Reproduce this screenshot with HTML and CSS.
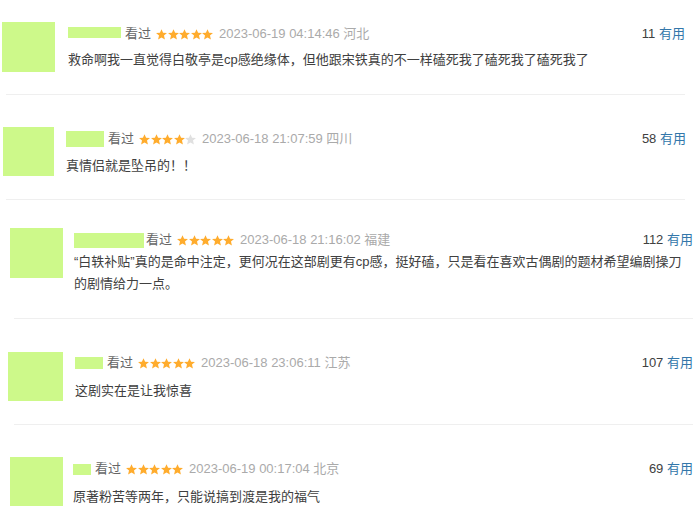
FILE: index.html
```html
<!DOCTYPE html>
<html lang="zh">
<head>
<meta charset="utf-8">
<title>短评</title>
<link rel="stylesheet" href="styles.css">
</head>
<body>
<svg width="0" height="0" class="defs">
  <defs>
    <symbol id="star" viewBox="1.2 1.2 21.6 21.6"><path d="M12 1.5l3.1 7.1 7.6.6-5.8 5 1.8 7.5L12 17.7l-6.7 4 1.8-7.5-5.8-5 7.6-.6z"/></symbol>
  </defs>
</svg>

<div class="review r1">
  <div class="avatar av1"></div>
  <div class="main m1">
    <div class="meta">
      <span class="name n1"></span>
      <span class="watched">看过</span>
      <span class="stars"><svg class="on"><use href="#star"/></svg><svg class="on"><use href="#star"/></svg><svg class="on"><use href="#star"/></svg><svg class="on"><use href="#star"/></svg><svg class="on"><use href="#star"/></svg></span>
      <span class="time">2023-06-19 04:14:46 河北</span>
      <span class="votes"><span class="count">11</span> <span class="useful">有用</span></span>
    </div>
    <p class="text t1">救命啊我一直觉得白敬亭是cp感绝缘体，但他跟宋铁真的不一样磕死我了磕死我了磕死我了</p>
  </div>
</div>
<div class="sep s1"></div>

<div class="review r2">
  <div class="avatar av2"></div>
  <div class="main m2">
    <div class="meta">
      <span class="name n2"></span>
      <span class="watched">看过</span>
      <span class="stars"><svg class="on"><use href="#star"/></svg><svg class="on"><use href="#star"/></svg><svg class="on"><use href="#star"/></svg><svg class="on"><use href="#star"/></svg><svg class="off"><use href="#star"/></svg></span>
      <span class="time">2023-06-18 21:07:59 四川</span>
      <span class="votes"><span class="count">58</span> <span class="useful">有用</span></span>
    </div>
    <p class="text t2">真情侣就是坠吊的！！</p>
  </div>
</div>
<div class="sep s2"></div>

<div class="review r3">
  <div class="avatar av3"></div>
  <div class="main m3">
    <div class="meta">
      <span class="name n3"></span>
      <span class="watched">看过</span>
      <span class="stars"><svg class="on"><use href="#star"/></svg><svg class="on"><use href="#star"/></svg><svg class="on"><use href="#star"/></svg><svg class="on"><use href="#star"/></svg><svg class="on"><use href="#star"/></svg></span>
      <span class="time">2023-06-18 21:16:02 福建</span>
      <span class="votes"><span class="count">112</span> <span class="useful">有用</span></span>
    </div>
    <p class="text t3">“白轶补贴”真的是命中注定，更何况在这部剧更有cp感，挺好磕，只是看在喜欢古偶剧的题材希望编剧操刀的剧情给力一点。</p>
  </div>
</div>
<div class="sep s3"></div>

<div class="review r4">
  <div class="avatar av4"></div>
  <div class="main m4">
    <div class="meta">
      <span class="name n4"></span>
      <span class="watched">看过</span>
      <span class="stars"><svg class="on"><use href="#star"/></svg><svg class="on"><use href="#star"/></svg><svg class="on"><use href="#star"/></svg><svg class="on"><use href="#star"/></svg><svg class="on"><use href="#star"/></svg></span>
      <span class="time">2023-06-18 23:06:11 江苏</span>
      <span class="votes"><span class="count">107</span> <span class="useful">有用</span></span>
    </div>
    <p class="text t4">这剧实在是让我惊喜</p>
  </div>
</div>
<div class="sep s4"></div>

<div class="review r5">
  <div class="avatar av5"></div>
  <div class="main m5">
    <div class="meta">
      <span class="name n5"></span>
      <span class="watched">看过</span>
      <span class="stars"><svg class="on"><use href="#star"/></svg><svg class="on"><use href="#star"/></svg><svg class="on"><use href="#star"/></svg><svg class="on"><use href="#star"/></svg><svg class="on"><use href="#star"/></svg></span>
      <span class="time">2023-06-19 00:17:04 北京</span>
      <span class="votes"><span class="count">69</span> <span class="useful">有用</span></span>
    </div>
    <p class="text t5">原著粉苦等两年，只能说搞到渡是我的福气</p>
  </div>
</div>
</body>
</html>
```

FILE: styles.css
```css
html, body {
  margin: 0;
  padding: 0;
  background: #fff;
  width: 700px;
  height: 523px;
  overflow: hidden;
  font-family: "Liberation Sans", "Noto Sans CJK SC", sans-serif;
  font-size: 13px;
  color: #404040;
}

.defs {
  position: absolute;
  width: 0;
  height: 0;
}

.review {
  display: flex;
  align-items: flex-start;
}

.avatar {
  flex: none;
  background: #cdf98a;
}

.main {
  flex: 1;
  min-width: 0;
}

.meta {
  display: flex;
  align-items: center;
  height: 18px;
  line-height: 18px;
  white-space: nowrap;
}

.name {
  flex: none;
  background: #cdf98a;
  margin-right: 4px;
}

.watched {
  color: #666;
  margin-right: 5px;
}

.stars {
  display: flex;
  gap: 0.5px;
  margin-right: 6px;
}

.stars svg {
  width: 11px;
  height: 11px;
}

.stars .on { fill: #ffac2d; }
.stars .off { fill: #e0e0e0; }

.time {
  color: #aaa;
}

.votes {
  margin-left: auto;
  color: #404040;
}

.useful {
  color: #3377aa;
}

.text {
  margin: 0;
  line-height: 22px;
  color: #404040;
}

.sep {
  height: 1px;
  background: #efefef;
}

/* review 1 */
.r1 { padding: 22px 15px 0 2px; }
.av1 { width: 53px; height: 50px; }
.m1 { margin: 3px 0 0 13px; }
.n1 { width: 53px; height: 11px; margin-top: -4px; }
.t1 { margin-top: 6px; }
.s1 { margin: 22px 15px 0 6px; }

/* review 2 */
.r2 { padding: 32px 14px 0 3px; }
.av2 { width: 51px; height: 49px; }
.m2 { margin: 3px 0 0 12px; }
.n2 { width: 38px; height: 16px; }
.t2 { margin-top: 7px; }
.s2 { margin: 22px 15px 0 6px; }

/* review 3 */
.r3 { padding: 28px 7px 0 10px; }
.av3 { width: 53px; height: 50px; }
.m3 { margin: 3px 0 0 11px; }
.n3 { width: 70px; height: 15px; margin-right: 2px; }
.t3 { margin-top: 2px; }
.s3 { margin: 23px 7px 0 14px; }

/* review 4 */
.r4 { padding: 33px 7px 0 8px; }
.av4 { width: 55px; height: 49px; }
.m4 { margin: 2px 0 0 12px; }
.n4 { width: 28px; height: 12px; }
.t4 { margin-top: 8px; }
.s4 { margin: 22px 7px 0 14px; }

/* review 5 */
.r5 { padding: 32px 7px 0 10px; }
.av5 { width: 53px; height: 49px; }
.m5 { margin: 3px 0 0 10px; }
.n5 { width: 18px; height: 11px; }
.t5 { margin-top: 8px; }
```
